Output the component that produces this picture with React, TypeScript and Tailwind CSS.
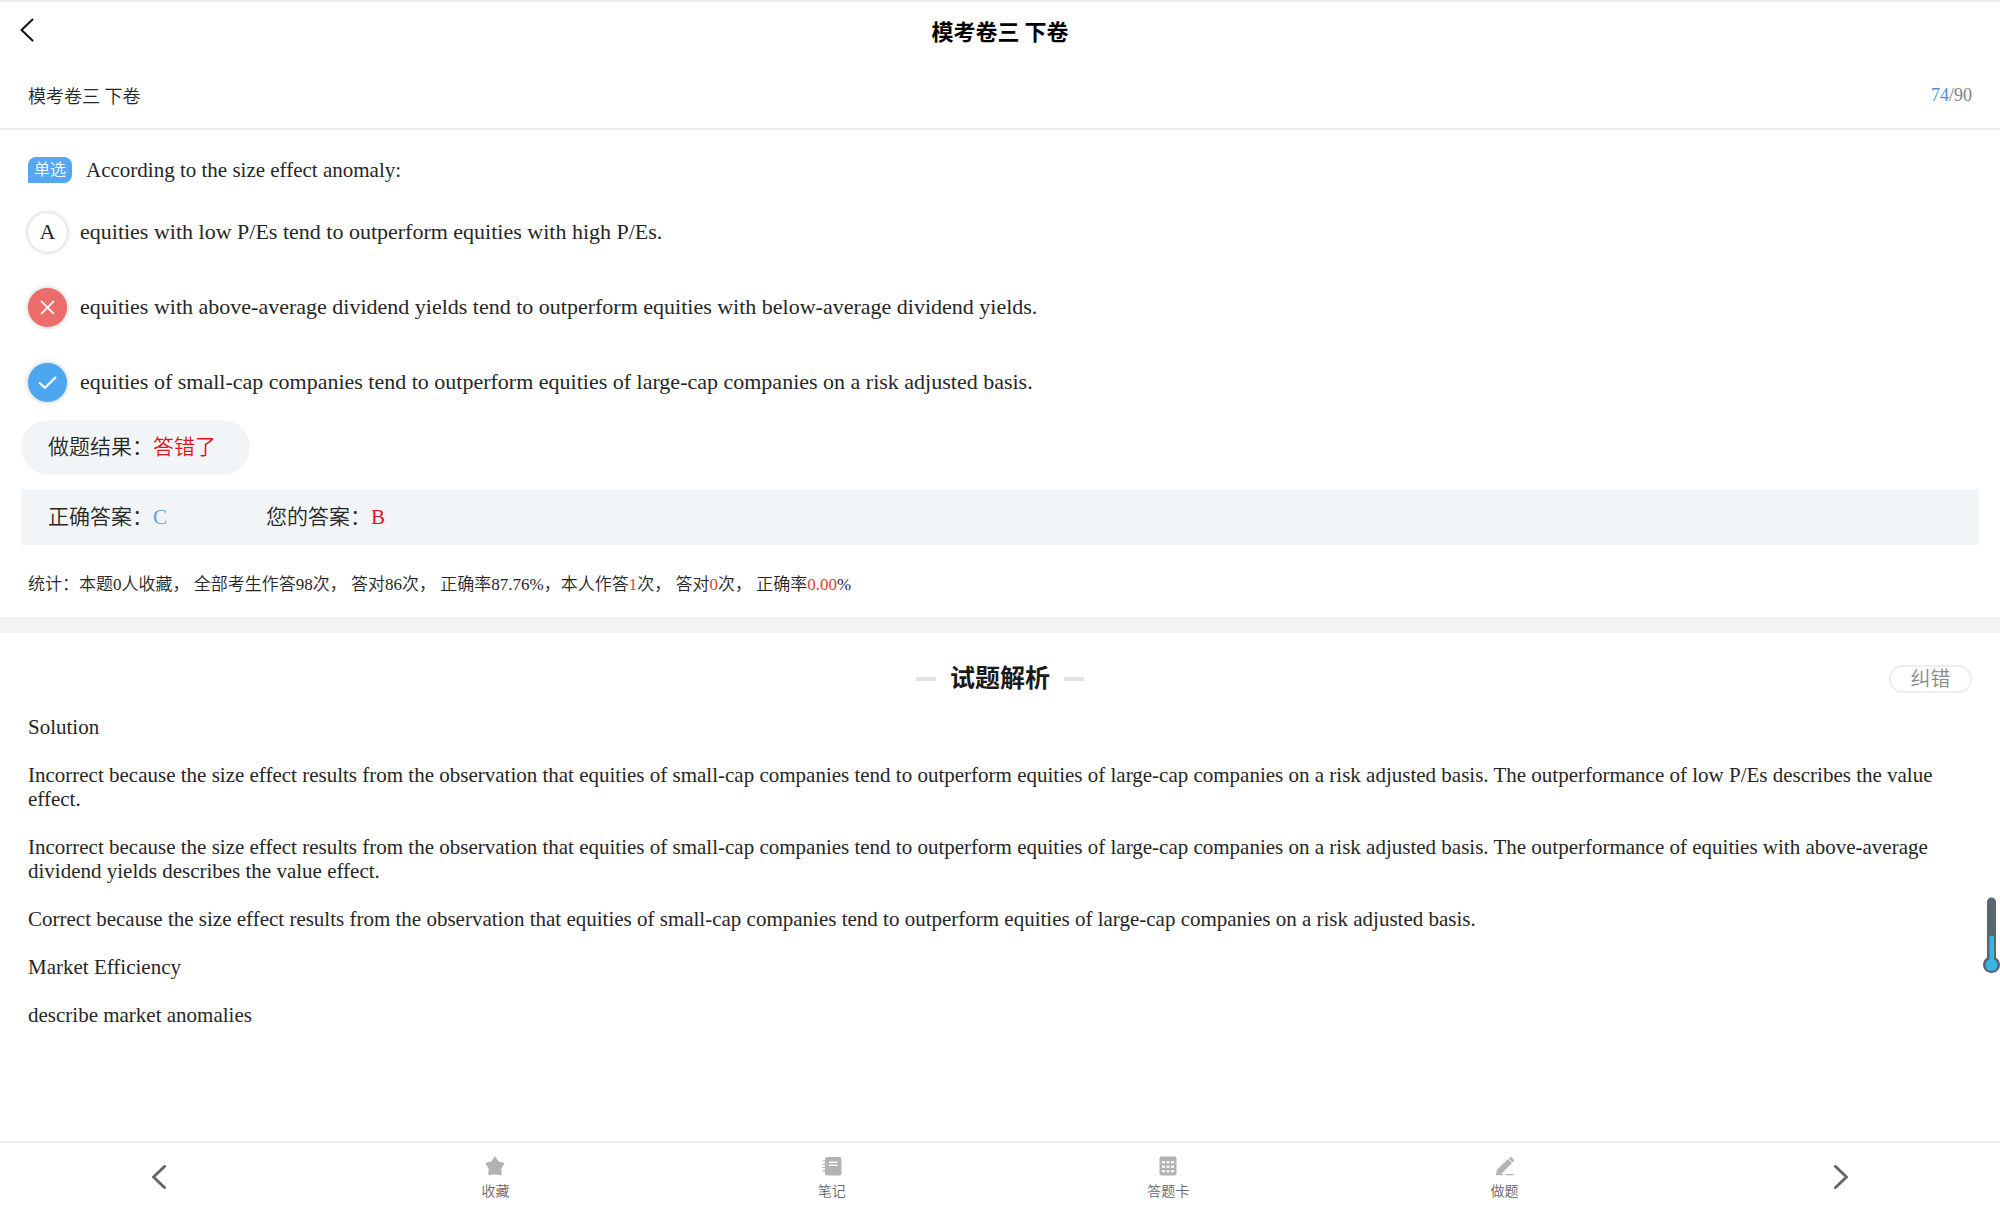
import clsx from "clsx";

const options = [
  {
    key: "A",
    state: "idle",
    text: "equities with low P/Es tend to outperform equities with high P/Es.",
  },
  {
    key: "B",
    state: "wrong",
    text: "equities with above-average dividend yields tend to outperform equities with below-average dividend yields.",
  },
  {
    key: "C",
    state: "right",
    text: "equities of small-cap companies tend to outperform equities of large-cap companies on a risk adjusted basis.",
  },
];

const analysis = [
  "Solution",
  "Incorrect because the size effect results from the observation that equities of small-cap companies tend to outperform equities of large-cap companies on a risk adjusted basis. The outperformance of low P/Es describes the value effect.",
  "Incorrect because the size effect results from the observation that equities of small-cap companies tend to outperform equities of large-cap companies on a risk adjusted basis. The outperformance of equities with above-average dividend yields describes the value effect.",
  "Correct because the size effect results from the observation that equities of small-cap companies tend to outperform equities of large-cap companies on a risk adjusted basis.",
  "Market Efficiency",
  "describe market anomalies",
];

const Chevron = ({ flip = false, className }: { flip?: boolean; className: string }) => (
  <svg viewBox="0 0 14 24" width="14" height="24" fill="none" stroke="currentColor" strokeLinecap="round" strokeLinejoin="round" className={className}>
    <path d={flip ? "M1.5 1.5 12.5 12 1.5 22.5" : "M12.5 1.5 1.5 12 12.5 22.5"} />
  </svg>
);

const StarIcon = () => (
  <svg viewBox="0 0 20 20" className="size-5" fill="currentColor" stroke="currentColor" strokeWidth="1.6" strokeLinejoin="round">
    <path d="M10 1.4 12.9 6 18.6 7.6 15.6 12 15.9 18.4 10 17.4 4.1 18.4 4.4 12 1.4 7.6 7.1 6Z" />
  </svg>
);

const NoteIcon = () => (
  <svg viewBox="0 0 20 20" className="size-5" fill="currentColor">
    <rect x="3" y="1" width="16.5" height="18.5" rx="2" />
    <path d="M0.5 5h4M0.5 8.3h4M0.5 11.6h4M0.5 14.9h4" stroke="currentColor" strokeWidth="1.2" />
    <path d="M7 6.2h8.5M7 9.2h8.5" stroke="#fff" strokeWidth="1.5" />
  </svg>
);

const SheetIcon = () => (
  <svg viewBox="0 0 20 20" className="size-5">
    <rect x="1.5" y="0.5" width="17" height="19" rx="2" fill="currentColor" />
    <path
      d="M4 6.2h3M8.5 6.2h3M13 6.2h3M4 10.7h3M8.5 10.7h3M13 10.7h3M4 15.2h3M8.5 15.2h3M13 15.2h3"
      stroke="#fff"
      strokeWidth="2"
    />
  </svg>
);

const PencilIcon = () => (
  <svg viewBox="0 0 20 20" className="size-5" fill="currentColor">
    <path d="M13 3 17 7 6.4 17.8 1 18.8 2 13.8Z" />
    <path d="M13.7 2.4 15 1.2Q15.8 0.6 16.5 1.2L18.8 3.5Q19.4 4.2 18.8 4.9L17.6 6.2Z" />
    <path d="M1 18h7v1.3H1zM11 18h7.5v1.3H11z" />
  </svg>
);

const tools = [
  { label: "收藏", icon: StarIcon },
  { label: "笔记", icon: NoteIcon },
  { label: "答题卡", icon: SheetIcon },
  { label: "做题", icon: PencilIcon },
];

const OptionMark = ({ state, label }: { state: string; label: string }) => {
  if (state === "wrong") {
    return (
      <svg viewBox="0 0 40 40" className="size-full" fill="none" stroke="#fff" strokeWidth="2" strokeLinecap="round">
        <path d="M14 14 26 26M26 14 14 26" />
      </svg>
    );
  }
  if (state === "right") {
    return (
      <svg viewBox="0 0 40 40" className="size-full" fill="none" stroke="#fff" strokeWidth="2.2" strokeLinecap="round" strokeLinejoin="round">
        <path d="M12 20.5 17.5 25.5 28 15" />
      </svg>
    );
  }
  return <span>{label}</span>;
};

const App = () => {
  return (
    <div className="relative flex min-h-screen flex-col border-t-2 border-[#eeeeee] bg-white font-['Liberation_Serif','Noto_Sans_CJK_SC',serif] font-[350] text-[#262626]">
      <header className="grid h-14 grid-cols-[1fr_auto_1fr] items-center">
        <button type="button" aria-label="返回" className="ml-5 w-fit text-[#111111]">
          <Chevron className="stroke-2" />
        </button>
        <h1 className="font-['Noto_Sans_CJK_SC',sans-serif] text-[22px] leading-8 font-bold text-black">模考卷三 下卷</h1>
      </header>

      <div className="flex h-[72px] items-start justify-between border-b-2 border-[#f0f0f0] px-7 pt-[23px] text-lg">
        <h2 className="leading-8">模考卷三 下卷</h2>
        <span className="leading-7 text-[#808080]">
          <span className="text-[#4a90d9]">74</span>/90
        </span>
      </div>

      <main className="grow">
        <section className="pt-6">
          <div className="flex items-center gap-[14px] px-7 leading-8">
            <span className="rounded-lg rounded-bl-none bg-[#53a8f1] px-[6px] text-base leading-[26px] text-white">单选</span>
            <p className="text-[21px]">According to the size effect anomaly:</p>
          </div>

          <div className="mt-[26px] flex flex-col gap-[35px] px-7">
            {options.map((option) => (
              <button key={option.key} type="button" className="flex items-center gap-[13px] text-left text-[22px] leading-10">
                <span
                  className={clsx(
                    "flex size-[39px] shrink-0 items-center justify-center rounded-full shadow-[0_0_5px_rgba(0,0,0,0.25)]",
                    option.state === "idle" && "bg-white",
                    option.state === "wrong" && "bg-[#ec6c69]",
                    option.state === "right" && "bg-[#4da6f0]"
                  )}
                >
                  <OptionMark state={option.state} label={option.key} />
                </span>
                <span>{option.text}</span>
              </button>
            ))}
          </div>

          <div className="mt-[18px] px-[21px] text-[21px] leading-[55px]">
            <div className="w-fit rounded-full bg-[#f2f5f8] pr-[34px] pl-[27px]">
              做题结果：<span className="text-[#e0141c]">答错了</span>
            </div>
            <div className="mt-[15px] flex gap-[99px] bg-[#f2f5f8] pl-[27px]">
              <span>
                正确答案：<span className="text-[#5fa5dc]">C</span>
              </span>
              <span>
                您的答案：<span className="text-[#e0141c]">B</span>
              </span>
            </div>
          </div>

          <p className="px-7 pt-7 pb-5 text-[17px] leading-6">
            统计：本题0人收藏， 全部考生作答98次， 答对86次， 正确率87.76%，本人作答
            <span className="text-[#e23c39]">1</span>次， 答对<span className="text-[#e23c39]">0</span>次， 正确率
            <span className="text-[#e23c39]">0.00</span>%
          </p>
        </section>

        <section className="border-t-16 border-[#f3f3f3] px-7 pt-7">
          <div className="grid grid-cols-[1fr_auto_1fr] items-center">
            <div className="col-start-2 flex items-center gap-[14px]">
              <span className="h-1 w-5 bg-[#e0e0e0]" />
              <h2 className="text-[25px] leading-9 font-bold text-[#1a1a1a]">试题解析</h2>
              <span className="h-1 w-5 bg-[#e0e0e0]" />
            </div>
            <button type="button" className="w-[83px] justify-self-end rounded-full border-2 border-[#eeeeee] text-[20px] leading-6 text-[#8a8a8a]">
              纠错
            </button>
          </div>

          <div className="mt-[18px] flex flex-col gap-6 text-[21px] leading-6">
            {analysis.map((text) => (
              <p key={text}>{text}</p>
            ))}
          </div>
        </section>
      </main>

      <nav className="flex h-[70px] items-center justify-between border-t-2 border-[#eeeeee] px-[133px]">
        <button type="button" aria-label="上一题" className="flex w-[52px] justify-center text-[#666666]">
          <Chevron className="stroke-3" />
        </button>
        {tools.map(({ label, icon: Icon }) => (
          <button key={label} type="button" className="flex w-[52px] flex-col items-center gap-[6px] pt-[3px] text-sm leading-5 text-[#666666]">
            <span className="text-[#b3b3b3]">
              <Icon />
            </span>
            {label}
          </button>
        ))}
        <button type="button" aria-label="下一题" className="flex w-[52px] justify-center text-[#666666]">
          <Chevron flip className="stroke-3" />
        </button>
      </nav>

      {/* floating gauge pinned to the window edge */}
      <svg viewBox="0 0 18 80" className="absolute right-0 bottom-[235px] h-20 w-[18px]">
        <path d="M5 6a4.5 4.5 0 0 1 9 0V61.5a8.5 8.5 0 1 1-9 0Z" fill="#5c6670" />
        <path d="M7.5 40h4.500V64h-4.500Z" fill="#35b6e6" />
        <circle cx="9.5" cy="69" r="6" fill="#35b6e6" />
      </svg>
    </div>
  );
};

export default App;
